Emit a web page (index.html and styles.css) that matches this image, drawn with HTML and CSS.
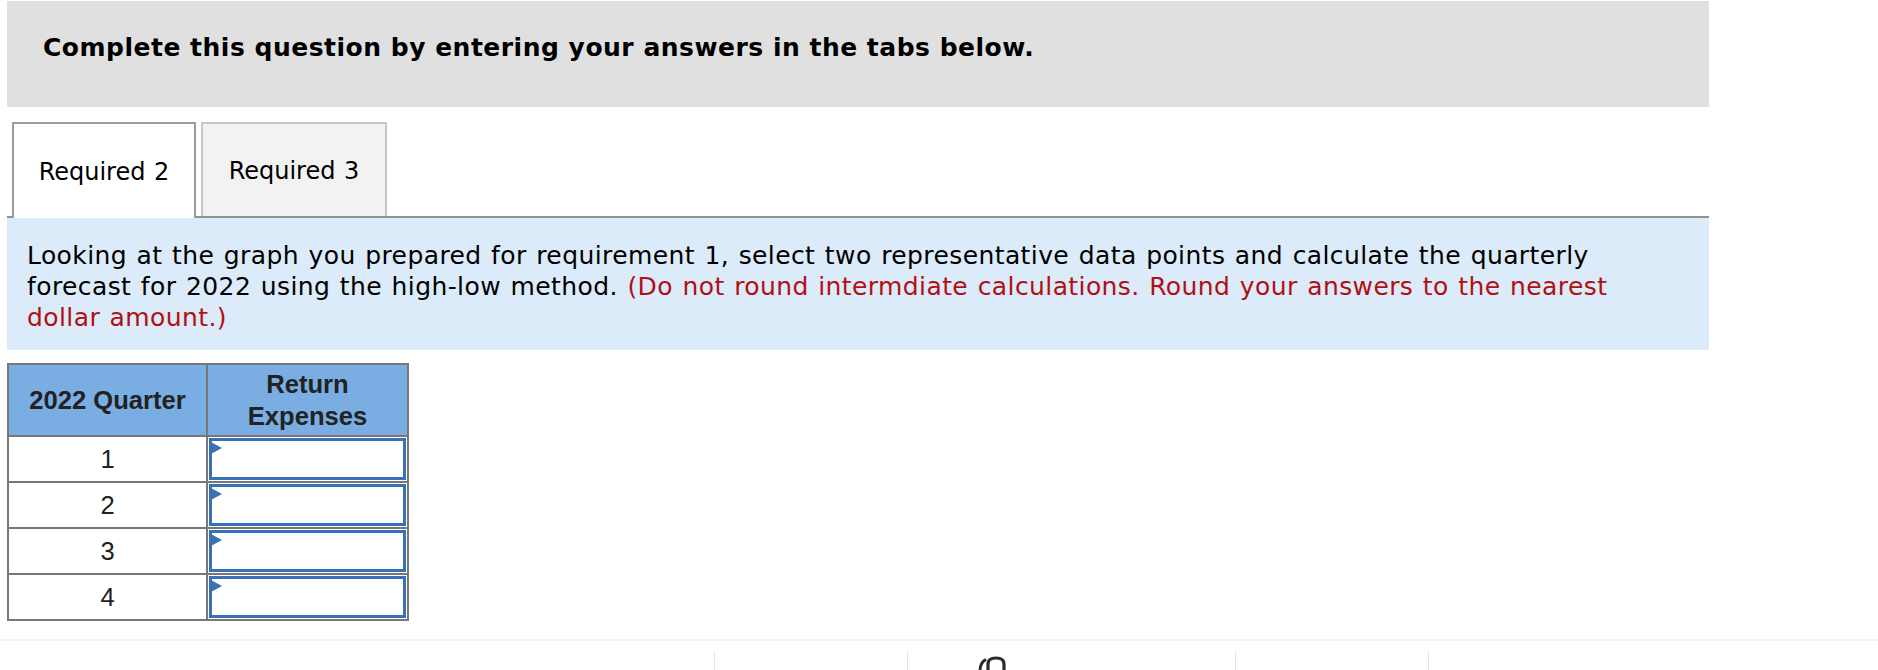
FILE: index.html
```html
<!DOCTYPE html>
<html lang="en">
<head>
<meta charset="utf-8">
<title>Complete this question</title>
<link rel="stylesheet" href="styles.css">
</head>
<body>
<div class="page">
  <div class="banner">
    <h1 class="banner-title">Complete this question by entering your answers in the tabs below.</h1>
  </div>

  <div class="tabs">
    <div class="tab tab-active">Required 2</div>
    <div class="tab tab-inactive">Required 3</div>
  </div>

  <div class="panel">
    <p class="instructions">Looking at the graph you prepared for requirement 1, select two representative data points and calculate the quarterly<br>forecast for 2022 using the high-low method. <span class="note">(Do not round intermdiate calculations. Round your answers to the nearest<br>dollar amount.)</span></p>
  </div>

  <div class="answer-grid">
    <div class="head">2022 Quarter</div>
    <div class="head">Return<br>Expenses</div>

    <div class="label">1</div>
    <div class="entry"><div class="input"><span class="flag"></span></div></div>

    <div class="label">2</div>
    <div class="entry"><div class="input"><span class="flag"></span></div></div>

    <div class="label">3</div>
    <div class="entry"><div class="input"><span class="flag"></span></div></div>

    <div class="label">4</div>
    <div class="entry"><div class="input"><span class="flag"></span></div></div>
  </div>
</div>

<div class="footer">
  <div class="foot-cell"></div>
  <div class="foot-cell sep"></div>
  <div class="foot-cell sep">
    <svg class="foot-icon" width="34" height="16" viewBox="0 0 34 16" aria-hidden="true">
      <path d="M6 15 C6 9 8 6 11 4" fill="none" stroke="#2b2b2b" stroke-width="3" stroke-linecap="round"/>
      <path d="M14 16 L14 8 C14 4 17 2 22 2 C27 2 30 4 30 8 L30 16" fill="none" stroke="#2b2b2b" stroke-width="3.2"/>
    </svg>
  </div>
  <div class="foot-cell sep"></div>
  <div class="foot-cell sep"></div>
</div>
</body>
</html>
```
FILE: styles.css
```css
html, body {
  margin: 0;
  padding: 0;
  background: #ffffff;
}

body {
  font-family: "DejaVu Sans", Verdana, sans-serif;
  color: #000000;
  width: 1878px;
  height: 670px;
  overflow: hidden;
}

.page {
  padding: 1px 0 0 7px;
  width: 1702px;
}

.banner {
  background: #e0e0e0;
  height: 106px;
  box-sizing: border-box;
  padding: 32px 0 0 36px;
}

.banner-title {
  margin: 0;
  font-size: 25px;
  line-height: 30px;
  font-weight: bold;
  letter-spacing: 0.5px;
  white-space: nowrap;
}

.tabs {
  display: flex;
  gap: 5px;
  margin-top: 15px;
  padding-left: 5px;
  height: 94px;
  border-bottom: 2px solid #919191;
}

.tab {
  box-sizing: border-box;
  display: flex;
  align-items: center;
  justify-content: center;
  font-size: 24px;
  word-spacing: 1px;
  padding-top: 2px;
}

.tab-active {
  width: 184px;
  height: 96px;
  background: #ffffff;
  border: 2px solid #9b9b9b;
  border-bottom: none;
  position: relative;
  z-index: 1;
}

.tab-inactive {
  width: 186px;
  height: 94px;
  background: #f2f2f2;
  border: 2px solid #c6c6c6;
  border-bottom: none;
}

.panel {
  background: #dbebf9;
  padding: 22px 20px 17px 20px;
}

.instructions {
  margin: 0;
  font-size: 25px;
  line-height: 31px;
  letter-spacing: 0.4px;
  word-spacing: 1.2px;
  white-space: nowrap;
}

.note {
  color: #b20f12;
}

.answer-grid {
  margin-top: 13px;
  display: grid;
  grid-template-columns: 197px 199px;
  grid-template-rows: 70px 44px 44px 44px 44px;
  gap: 2px;
  background: #777777;
  border: 2px solid #777777;
  width: fit-content;
  font-family: "Liberation Sans", Arial, Helvetica, sans-serif;
  color: #222222;
}

.head {
  background: #7aaee3;
  font-weight: bold;
  font-size: 25.6px;
  line-height: 32px;
  display: flex;
  align-items: center;
  justify-content: center;
  text-align: center;
}

.label {
  background: #ffffff;
  font-size: 25.6px;
  display: flex;
  align-items: center;
  justify-content: center;
}

.entry {
  background: #ffffff;
  padding: 1px;
}

.input {
  position: relative;
  box-sizing: border-box;
  height: 100%;
  border: 3px solid #3a70b5;
  background: #ffffff;
}

.flag {
  position: absolute;
  top: 0;
  left: -3px;
  width: 0;
  height: 0;
  border-top: 7px solid transparent;
  border-bottom: 7px solid transparent;
  border-left: 13px solid #3a70b5;
}

.footer {
  margin-top: 18px;
  border-top: 2px solid #f2f2f2;
  padding-top: 10px;
  display: grid;
  grid-template-columns: 714px 193px 328px 193px 1fr;
  height: 40px;
}

.foot-cell {
  height: 40px;
}

.sep {
  border-left: 1px solid #e6e6e6;
}

.foot-icon {
  display: block;
  margin: 5px 0 0 66px;
}
```
